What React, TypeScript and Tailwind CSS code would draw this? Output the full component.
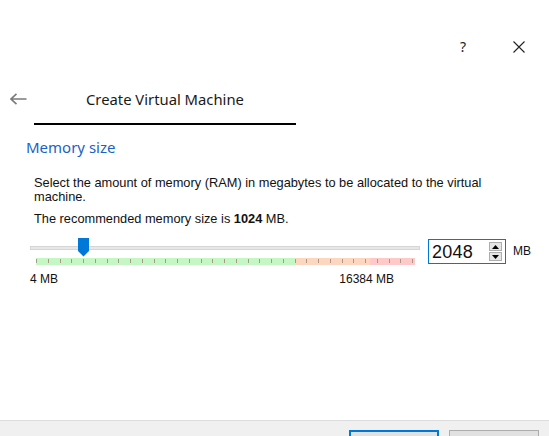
import React from 'react';

// Memory page of the VirtualBox "Create Virtual Machine" wizard

const TICKS = Array.from({ length: 33 }, (_, i) => i * 11.75);

function TickBar() {
  return (
    <svg width="379" height="7" viewBox="0 0 379 7" className="block">
      <rect x="0" y="0" width="260" height="7" fill="#c5f7c5" />
      <rect x="260" y="0" width="74" height="7" fill="#fdd6bf" />
      <rect x="334" y="0" width="45" height="7" fill="#ffc9c9" />
      {TICKS.map((x) => (
        <rect key={x} x={Math.round(x)} y="1" width="1" height="4" fill="#a8998a" />
      ))}
    </svg>
  );
}

function SpinBox() {
  return (
    <div className="ml-[8px] mt-[1px] flex h-[25px] w-[78px] items-center border border-[#0078d7] bg-white pl-[3px] pr-[3px]">
      <span className="flex-1 text-[18px] leading-none tracking-[0.2px] text-[#111]">2048</span>
      <div className="flex flex-col gap-[1px]">
        <div className="flex h-[9px] w-[13px] items-center justify-center border border-[#adadad] bg-[#e5e5e5]">
          <svg width="7" height="4" viewBox="0 0 7 4"><path d="M0 4 L3.5 0 L7 4 Z" fill="#000" /></svg>
        </div>
        <div className="flex h-[9px] w-[13px] items-center justify-center border border-[#adadad] bg-[#e5e5e5]">
          <svg width="7" height="4" viewBox="0 0 7 4"><path d="M0 0 L3.5 4 L7 0 Z" fill="#000" /></svg>
        </div>
      </div>
    </div>
  );
}

export default function App() {
  return (
    <div className="flex h-[436px] w-[549px] flex-col overflow-hidden bg-white font-['Liberation_Sans',Arial,sans-serif] text-black">
      {/* title bar */}
      <div className="flex h-[82px] items-start justify-end pt-[39px] pr-[24px]">
        <span className="mr-[47px] text-[14px] leading-[16px] font-['Noto_Sans',sans-serif] text-[#222]">?</span>
        <svg width="12" height="12" viewBox="0 0 12 12" className="mt-[2px]">
          <path d="M0.5 0.5 L11.5 11.5 M11.5 0.5 L0.5 11.5" stroke="#222" strokeWidth="1.1" fill="none" />
        </svg>
      </div>

      {/* header */}
      <div className="flex h-[34px] items-center">
        <svg width="17" height="12" viewBox="0 0 17 12" className="ml-[10px]">
          <path d="M1 6 H16.5 M6.5 0.8 L1 6 L6.5 11.2" stroke="#7a7a7a" strokeWidth="1.6" fill="none" />
        </svg>
        <span className="ml-[59px] text-[14.8px] font-['Noto_Sans',sans-serif] text-[#1a1a1a]">Create Virtual Machine</span>
      </div>
      <div className="ml-[34px] mt-[7px] h-[2px] w-[262px] bg-black" />

      {/* content */}
      <div className="ml-[26px] mt-[12px] h-[20px] text-[15px] leading-[20px] font-['Noto_Sans',sans-serif] text-[#1a62c6]">
        Memory size
      </div>

      <div className="ml-[34px] mt-[19px] text-[12.8px] leading-[14px] text-[#111]">
        <p>Select the amount of memory (RAM) in megabytes to be allocated to the virtual</p>
        <p>machine.</p>
        <p className="mt-[8px]">
          The recommended memory size is <b>1024</b> MB.
        </p>
      </div>

      <div className="ml-[30px] mt-[12px] flex items-start">
        <div className="w-[390px]">
          <div className="relative h-[19px]">
            <div className="absolute left-0 right-0 top-[8px] h-[4px] border border-[#d6d6d6] bg-[#e7e7e7]" />
            <svg width="11" height="19" viewBox="0 0 11 19" className="absolute left-[48px] top-0">
              <path d="M0 0 H11 V13 L5.5 18.5 L0 13 Z" fill="#0078d7" />
            </svg>
          </div>
          <div className="ml-[6px] mt-[1px]">
            <TickBar />
          </div>
          <div className="mt-[7px] flex justify-between pr-[26px] text-[12px] leading-[14px] text-[#111]">
            <span>4 MB</span>
            <span>16384 MB</span>
          </div>
        </div>
        <SpinBox />
        <span className="ml-[7px] mt-[6px] text-[12px] leading-[14px] text-[#111]">MB</span>
      </div>

      <div className="flex-1" />

      {/* footer, buttons run past the bottom edge */}
      <div className="flex h-[16px] shrink-0 justify-end gap-[10px] border-t border-[#dcdcdc] bg-[#f0f0f0] pr-[10px] pt-[9px]">
        <button className="h-[23px] w-[90px] shrink-0 border-2 border-[#0078d7] bg-[#e1e1e1]" />
        <button className="h-[23px] w-[90px] shrink-0 border border-[#adadad] bg-[#e1e1e1]" />
      </div>
    </div>
  );
}
